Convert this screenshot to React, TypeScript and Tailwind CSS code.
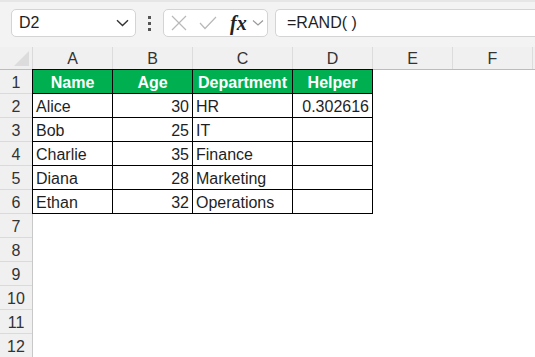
import React from "react";

const cols = [
  { l: "A", w: 80 },
  { l: "B", w: 80 },
  { l: "C", w: 100 },
  { l: "D", w: 80 },
  { l: "E", w: 80 },
  { l: "F", w: 80 },
];

type Cell = { t: string; align?: "left" | "right" | "center" };

const data: Cell[][] = [
  [{ t: "Name" }, { t: "Age" }, { t: "Department" }, { t: "Helper" }],
  [{ t: "Alice" }, { t: "30", align: "right" }, { t: "HR" }, { t: "0.302616", align: "right" }],
  [{ t: "Bob" }, { t: "25", align: "right" }, { t: "IT" }, { t: "" }],
  [{ t: "Charlie" }, { t: "35", align: "right" }, { t: "Finance" }, { t: "" }],
  [{ t: "Diana" }, { t: "28", align: "right" }, { t: "Marketing" }, { t: "" }],
  [{ t: "Ethan" }, { t: "32", align: "right" }, { t: "Operations" }, { t: "" }],
];

const widths = ["w-[80px]", "w-[80px]", "w-[100px]", "w-[80px]"];

export default function App() {
  const rows = Array.from({ length: 12 }, (_, i) => i + 1);
  return (
    <div
      className="w-[535px] h-[357px] overflow-hidden bg-white text-[#1f1f1f]"
      style={{ fontFamily: "'Liberation Sans', Arial, sans-serif" }}
    >
      {/* toolbar */}
      <div className="h-[47px] bg-[#f3f3f3] border-t-2 border-[#e6e6e6] flex items-start pt-[7px]">
        <div className="ml-[11px] w-[125px] h-[28px] bg-white border border-[#d4d4d4] rounded-[5px] flex items-center pl-[7px] pr-[6px]">
          <span className="text-[16px] flex-1">D2</span>
          <svg width="13" height="8" viewBox="0 0 13 8" fill="none">
            <path d="M1 1.2 L6.5 6.5 L12 1.2" stroke="#333" strokeWidth="1.4" />
          </svg>
        </div>
        <div className="w-[27px] h-[28px] flex flex-col items-center justify-center gap-[3px]">
          <div className="w-[3px] h-[3px] bg-[#555]" />
          <div className="w-[3px] h-[3px] bg-[#555]" />
          <div className="w-[3px] h-[3px] bg-[#555]" />
        </div>
        <div className="w-[105px] h-[28px] bg-white border border-[#d4d4d4] rounded-[5px] flex items-center pl-[7px]">
          <svg width="16" height="16" viewBox="0 0 16 16" fill="none">
            <path d="M1 1 L15 15 M15 1 L1 15" stroke="#b8b8b8" strokeWidth="1.2" />
          </svg>
          <svg className="ml-[12px]" width="18" height="14" viewBox="0 0 18 14" fill="none">
            <path d="M1 7 L6 12.5 L17 1" stroke="#b8b8b8" strokeWidth="1.2" />
          </svg>
          <span
            className="ml-[13px] text-[20px] italic font-bold leading-none text-[#222]"
            style={{ fontFamily: "'Liberation Serif', 'Times New Roman', serif" }}
          >
            fx
          </span>
          <svg className="ml-[5px]" width="12" height="8" viewBox="0 0 12 8" fill="none">
            <path d="M1 1.5 L6 6 L11 1.5" stroke="#9a9a9a" strokeWidth="1.2" />
          </svg>
        </div>
        <div className="ml-[7px] flex-1 h-[28px] bg-white border border-[#d4d4d4] border-r-0 rounded-l-[5px] flex items-center pl-[11px]">
          <span className="text-[16px]">=RAND( )</span>
        </div>
      </div>

      {/* column header */}
      <div className="flex h-[23px] bg-[#f0f0f0] border-b border-[#bcbcbc]">
        <div className="relative w-[33px] shrink-0 border-r border-[#dadada]">
          <svg className="absolute right-[3px] bottom-[3px]" width="15" height="15" viewBox="0 0 15 15">
            <path d="M15 0 L15 15 L0 15 Z" fill="#dcdcdc" />
          </svg>
        </div>
        {cols.map((c) => (
          <div
            key={c.l}
            className={`shrink-0 flex items-center justify-center pt-[2px] text-[16px] text-[#333] border-r border-[#dcdcdc] ${
              c.w === 100 ? "w-[100px]" : "w-[80px]"
            }`}
          >
            {c.l}
          </div>
        ))}
      </div>

      {/* body */}
      <div className="flex">
        <div className="w-[33px] shrink-0 bg-[#f0f0f0] border-r border-[#c8c8c8]">
          {rows.map((r) => (
            <div
              key={r}
              className="h-[24px] flex items-center justify-center pt-[2px] text-[16px] text-[#333] border-b border-[#dadada]"
            >
              {r}
            </div>
          ))}
        </div>
        <div className="flex flex-col">
          <div className="border-l border-t border-black -ml-px -mt-px">
            {data.map((row, ri) => (
              <div key={ri} className={`flex h-[24px] ${ri === 0 ? "bg-[#00b050]" : ""}`}>
                {row.map((cell, ci) => (
                  <div
                    key={ci}
                    className={`${widths[ci]} shrink-0 border-r border-b border-black flex items-center pt-[2px] text-[16px] px-[3px] ${
                      ri === 0
                        ? "justify-center font-bold text-white"
                        : cell.align === "right"
                        ? "justify-end"
                        : "justify-start"
                    }`}
                  >
                    {cell.t}
                  </div>
                ))}
              </div>
            ))}
          </div>
        </div>
      </div>
    </div>
  );
}
